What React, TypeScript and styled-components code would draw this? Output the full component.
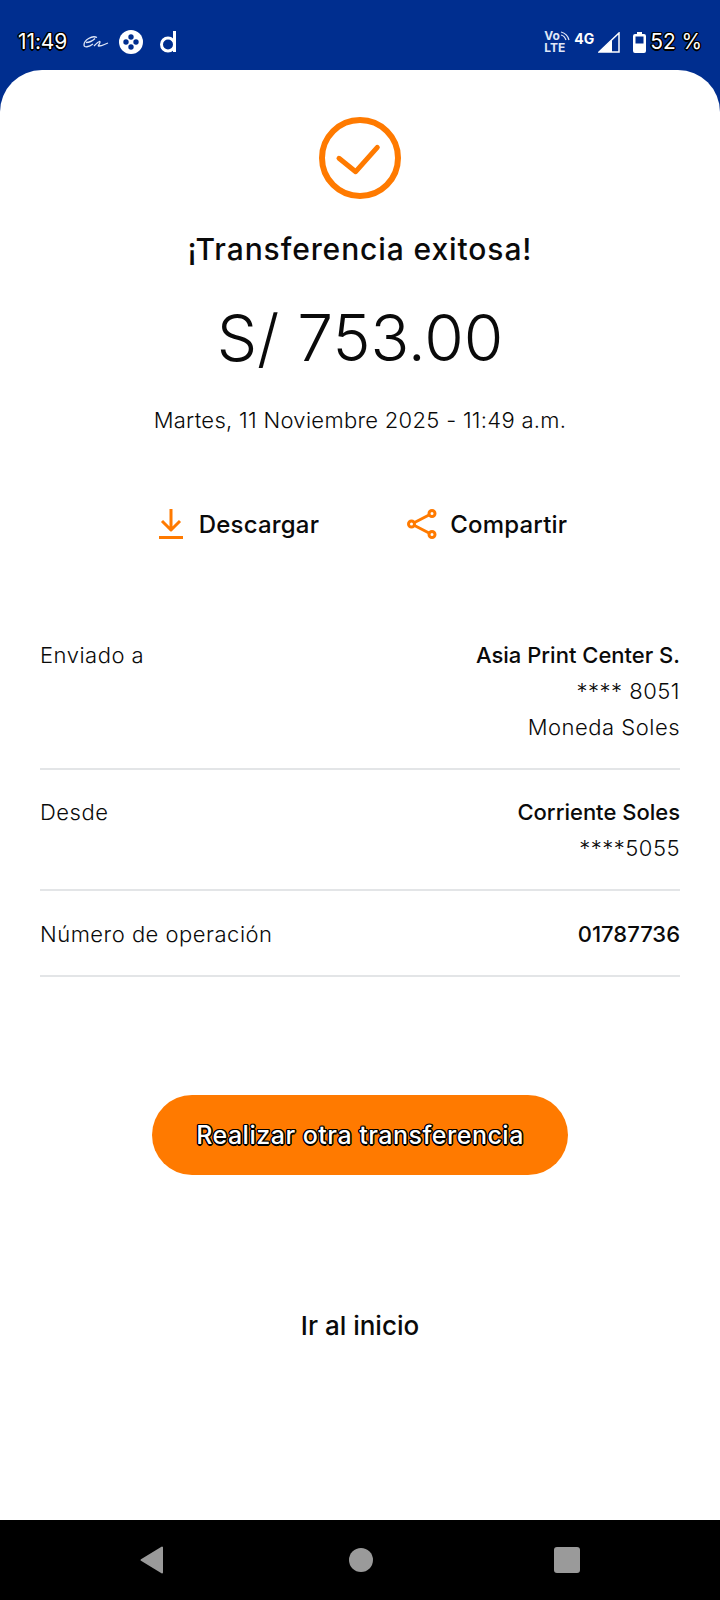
import React from "react";
import styled, { createGlobalStyle } from "styled-components";

const Global = createGlobalStyle`
  html, body { margin: 0; padding: 0; background: #fff; }
  body { font-family: Inter, "Noto Sans", "Liberation Sans", sans-serif; color: #0a0a0a; }
`;
const outline = `text-shadow: -1px -1px 0 #000, 1px -1px 0 #000, -1px 1px 0 #000, 1px 1px 0 #000, 0 -1.5px 0 #000, 0 1.5px 0 #000, -1.5px 0 0 #000, 1.5px 0 0 #000;`;
const Page = styled.div`width: 720px; height: 1600px; display: flex; flex-direction: column; background: #002e8f; overflow: hidden;`;
const StatusBar = styled.div`height: 70px; flex: none; display: flex; align-items: flex-start; padding: 28px 18px 0; box-sizing: border-box; justify-content: space-between;`;
const StatusGroup = styled.div`display: flex; align-items: center; height: 28px;`;
const StatusText = styled.span<{ $ml?: number }>`font-size: 21px; line-height: 28px; letter-spacing: -0.1px; color: #fff; margin-left: ${p => p.$ml ?? 0}px; ${outline}`;
const Network = styled.div`position: relative; width: 24px; height: 24px; font-size: 12px; line-height: 12px; font-weight: 700; color: #dfe6f7; white-space: nowrap;`;
const Generation = styled.span`margin-left: 6px; margin-top: -6px; font-size: 14px; line-height: 18px; font-weight: 700; color: #fff;`;
const Waves = styled.svg`position: absolute; top: 1px; right: -3px;`;
const Card = styled.main`flex: 1; background: #fff; border-radius: 42px 42px 0 0; display: flex; flex-direction: column; align-items: center; padding-top: 47px;`;
const Title = styled.h1`margin: 31px 0 0; font-size: 30px; line-height: 38px; font-weight: 500; letter-spacing: 0.9px; white-space: nowrap;`;
const Amount = styled.div`margin-top: 30px; font-size: 64px; line-height: 80px; font-weight: 300;`;
const DateLine = styled.div`margin-top: 27px; font-size: 22px; line-height: 30px; font-weight: 300; letter-spacing: 0.3px;`;
const Actions = styled.div`margin-top: 71px; margin-left: 6px; display: flex; align-items: center; height: 36px;`;
const Action = styled.button<{ $gap: number; $ml?: number }>`display: flex; align-items: center; gap: ${p => p.$gap}px; margin-left: ${p => p.$ml ?? 0}px; background: none; border: 0; padding: 0; font: inherit; font-size: 24px; font-weight: 500; letter-spacing: 0.2px; color: #0a0a0a;`;
const Rows = styled.section`margin-top: 76px; width: 640px;`;
const Row = styled.div`display: flex; justify-content: space-between; border-bottom: 2px solid #e3e5e7; padding: 24px 0 23px; font-size: 22px; line-height: 36px; font-weight: 300; letter-spacing: 0.5px; &:first-child { padding-top: 19px; } &:last-child { padding-top: 25px; }`;
const Values = styled.div`text-align: right;`;
const Strong = styled.div`font-weight: 500; letter-spacing: 0;`;
const Primary = styled.button`margin-top: 118px; width: 416px; height: 80px; border: 0; border-radius: 40px; background: #ff7a00; color: #fff; font: inherit; font-size: 25px; font-weight: 500; letter-spacing: 0.5px; ${outline}`;
const Link = styled.button`margin-top: 129px; background: none; border: 0; padding: 0; font: inherit; font-size: 26px; font-weight: 500; line-height: 44px; color: #0a0a0a;`;
const NavBar = styled.nav`height: 80px; flex: none; background: #000; display: flex; align-items: center; justify-content: center;`;
const Svg = styled.svg<{ $ml?: number }>`display: block; flex: none; margin-left: ${p => p.$ml ?? 0}px;`;

export default function App() {
  return (
    <Page>
      <Global />
      <StatusBar>
        <StatusGroup>
          <StatusText>11:49</StatusText>
          <Svg $ml={16} width="26" height="14" viewBox="0 0 26 14" fill="none" stroke="#dfe6f7" strokeWidth="1.300"><path d="M14 2.500C9 0 1 5 1 10c0 3 5 2 9-1M3 7.500c3 0 7-2 9-4M11 11c2-2 6-6 6-4s-3 4-1 4c3 0 6-2 9-3" /></Svg>
          <Svg $ml={10} width="24" height="24" viewBox="0 0 24 24"><circle cx="12" cy="12" r="12" fill="#fff" /><g fill="#002e8f"><circle cx="12" cy="7" r="2.700" /><circle cx="12" cy="17" r="2.700" /><circle cx="7" cy="12" r="2.700" /><circle cx="17" cy="12" r="2.700" /></g></Svg>
          <Svg $ml={16} width="18" height="22" viewBox="0 0 18 22" fill="none" stroke="#fff" strokeWidth="3"><circle cx="9" cy="13.500" r="6.500" /><path d="M15.500 0v21" /></Svg>
        </StatusGroup>
        <StatusGroup>
          <Network>Vo<br />LTE<Waves width="12" height="10" viewBox="0 0 12 10" fill="none" stroke="#dfe6f7" strokeWidth="1.200"><path d="M2 1c4 1 7 4 8 8M2 4c2 .5 4 2 5 5" /></Waves></Network>
          <Generation>4G</Generation>
          <Svg $ml={4} width="22" height="21" viewBox="0 0 22 21" fill="none"><path d="M21 1v19H1z" stroke="#fff" strokeWidth="1.500" /><path d="M14 8v12H1z" fill="#fff" /></Svg>
          <Svg $ml={13} width="13" height="21" viewBox="0 0 13 21"><path d="M4 0h5v2h2a2 2 0 0 1 2 2v15a2 2 0 0 1-2 2H2a2 2 0 0 1-2-2V4a2 2 0 0 1 2-2h2z" fill="#fff" /><rect x="2.500" y="4.500" width="8" height="7" fill="#002e8f" /></Svg>
          <StatusText $ml={4}>52 %</StatusText>
        </StatusGroup>
      </StatusBar>
      <Card>
        <Svg width="82" height="82" viewBox="0 0 82 82" fill="none" stroke="#ff7a00"><circle cx="41" cy="41" r="38" strokeWidth="6" /><path d="M20 41.300 36.700 54.700 58.300 30.300" strokeWidth="5" strokeLinecap="round" strokeLinejoin="round" /></Svg>
        <Title>¡Transferencia exitosa!</Title>
        <Amount>S/ 753.00</Amount>
        <DateLine>Martes, 11 Noviembre 2025 - 11:49 a.m.</DateLine>
        <Actions>
          <Action $gap={16}>
            <Svg width="24" height="30" viewBox="0 0 24 30" fill="none" stroke="#ff7a00" strokeWidth="3"><path d="M12 0v20M3 12l9 9 9-9" strokeLinejoin="round" /><path d="M0 28.500h24" /></Svg>
            Descargar
          </Action>
          <Action $gap={13} $ml={88}>
            <Svg width="30" height="30" viewBox="0 0 30 30" fill="none" stroke="#ff7a00" strokeWidth="3"><circle cx="4.500" cy="15" r="3" /><circle cx="25" cy="4.500" r="3" /><circle cx="25" cy="25.500" r="3" /><path d="M7.500 13.500 22 6M7.500 16.500 22 24" /></Svg>
            Compartir
          </Action>
        </Actions>
        <Rows>
          <Row><span>Enviado a</span><Values><Strong>Asia Print Center S.</Strong><div>**** 8051</div><div>Moneda Soles</div></Values></Row>
          <Row><span>Desde</span><Values><Strong>Corriente Soles</Strong><div>****5055</div></Values></Row>
          <Row><span>Número de operación</span><Values><Strong>01787736</Strong></Values></Row>
        </Rows>
        <Primary>Realizar otra transferencia</Primary>
        <Link>Ir al inicio</Link>
      </Card>
      <NavBar>
        <Svg width="24" height="28" viewBox="0 0 24 28"><path d="M22 1.500v25L1.500 14z" fill="#9a9a9a" stroke="#9a9a9a" strokeWidth="2" strokeLinejoin="round" /></Svg>
        <Svg $ml={185} width="24" height="24" viewBox="0 0 24 24"><circle cx="12" cy="12" r="12" fill="#9a9a9a" /></Svg>
        <Svg $ml={181} width="26" height="26" viewBox="0 0 26 26"><rect width="26" height="26" rx="3" fill="#9a9a9a" /></Svg>
      </NavBar>
    </Page>
  );
}
